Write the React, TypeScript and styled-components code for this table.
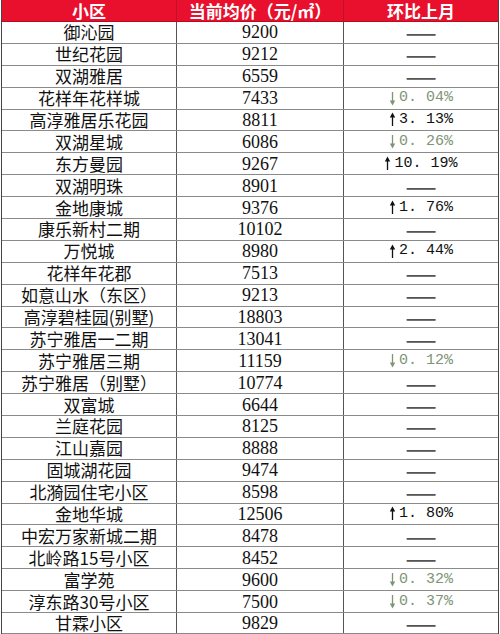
import React from "react";
import styled, { createGlobalStyle } from "styled-components";

const Global = createGlobalStyle`
  html, body { margin: 0; padding: 0; background: #fff; }
  body { width: 500px; height: 634px; overflow: hidden; }
`;

type Change = { dir: "up" | "down"; value: string } | null;
type Row = { name: string; price: string; change: Change };

const rows: Row[] = [
  { name: "御沁园", price: "9200", change: null },
  { name: "世纪花园", price: "9212", change: null },
  { name: "双湖雅居", price: "6559", change: null },
  { name: "花样年花样城", price: "7433", change: { dir: "down", value: "0.04%" } },
  { name: "高淳雅居乐花园", price: "8811", change: { dir: "up", value: "3.13%" } },
  { name: "双湖星城", price: "6086", change: { dir: "down", value: "0.26%" } },
  { name: "东方曼园", price: "9267", change: { dir: "up", value: "10.19%" } },
  { name: "双湖明珠", price: "8901", change: null },
  { name: "金地康城", price: "9376", change: { dir: "up", value: "1.76%" } },
  { name: "康乐新村二期", price: "10102", change: null },
  { name: "万悦城", price: "8980", change: { dir: "up", value: "2.44%" } },
  { name: "花样年花郡", price: "7513", change: null },
  { name: "如意山水（东区）", price: "9213", change: null },
  { name: "高淳碧桂园(别墅)", price: "18803", change: null },
  { name: "苏宁雅居一二期", price: "13041", change: null },
  { name: "苏宁雅居三期", price: "11159", change: { dir: "down", value: "0.12%" } },
  { name: "苏宁雅居（别墅）", price: "10774", change: null },
  { name: "双富城", price: "6644", change: null },
  { name: "兰庭花园", price: "8125", change: null },
  { name: "江山嘉园", price: "8888", change: null },
  { name: "固城湖花园", price: "9474", change: null },
  { name: "北漪园住宅小区", price: "8598", change: null },
  { name: "金地华城", price: "12506", change: { dir: "up", value: "1.80%" } },
  { name: "中宏万家新城二期", price: "8478", change: null },
  { name: "北岭路15号小区", price: "8452", change: null },
  { name: "富学苑", price: "9600", change: { dir: "down", value: "0.32%" } },
  { name: "淳东路30号小区", price: "7500", change: { dir: "down", value: "0.37%" } },
  { name: "甘霖小区", price: "9829", change: null },
];

const Table = styled.div`
  box-sizing: border-box;
  width: 498px;
  height: 634px;
  margin: 0 1px;
  display: grid;
  grid-template-rows: 22px repeat(27, 1fr);
  border-left: 1px solid #444;
  border-right: 1px solid #444;
`;

const Line = styled.div<{ $head?: boolean }>`
  display: grid;
  grid-template-columns: 175px 167px 1fr;
  background: ${(p) => (p.$head ? "#e8102c" : "#fff")};
  border-bottom: 1px solid ${(p) => (p.$head ? "#b50c22" : "#8a8a8a")};
  box-sizing: border-box;
  min-height: 0;
`;

const Cell = styled.div<{ $head?: boolean; $last?: boolean }>`
  display: flex;
  align-items: center;
  justify-content: center;
  min-height: 0;
  border-right: ${(p) => (p.$last ? "none" : `1px solid ${p.$head ? "#c0102a" : "#555"}`)};
  color: ${(p) => (p.$head ? "#fff" : "#111")};
  font-family: "Noto Sans CJK SC", sans-serif;
  font-weight: ${(p) => (p.$head ? 700 : 400)};
  font-size: 17px;
  line-height: 20px;
  white-space: nowrap;
`;

const Price = styled.span`
  font-family: "Liberation Serif", serif;
  font-size: 18px;
  line-height: 20px;
  color: #111;
`;

const Dash = styled.span`
  font-family: "Noto Sans CJK SC", sans-serif;
  font-size: 18px;
  line-height: 20px;
  font-weight: 700;
  color: #555;
`;

const Pct = styled.span<{ $down: boolean }>`
  display: inline-flex;
  align-items: center;
  font-family: "Liberation Mono", monospace;
  font-size: 15px;
  line-height: 20px;
  color: ${(p) => (p.$down ? "#7e9476" : "#111")};
`;

const Arrow = styled.svg`
  width: 7px;
  height: 15px;
  margin-right: 3px;
`;

function Trend({ c }: { c: Change }) {
  if (!c) return <Dash>——</Dash>;
  const down = c.dir === "down";
  const col = down ? "#7e9476" : "#111";
  const [a, b] = c.value.split(".");
  return (
    <Pct $down={down}>
      <Arrow viewBox="0 0 7 15">
        {down ? (
          <>
            <line x1="3.5" y1="1" x2="3.5" y2="11" stroke={col} strokeWidth="1.3" />
            <path d="M0.8 9.5 L3.5 14.5 L6.2 9.5 Z" fill={col} />
          </>
        ) : (
          <>
            <line x1="3.5" y1="4" x2="3.5" y2="14" stroke={col} strokeWidth="1.3" />
            <path d="M0.8 5.5 L3.5 0.5 L6.2 5.5 Z" fill={col} />
          </>
        )}
      </Arrow>
      {a}.&nbsp;{b}
    </Pct>
  );
}

export default function App() {
  return (
    <>
      <Global />
      <Table>
        <Line $head>
          <Cell $head>小区</Cell>
          <Cell $head>当前均价（元/㎡）</Cell>
          <Cell $head $last>环比上月</Cell>
        </Line>
        {rows.map((r) => (
          <Line key={r.name}>
            <Cell>{r.name}</Cell>
            <Cell>
              <Price>{r.price}</Price>
            </Cell>
            <Cell $last>
              <Trend c={r.change} />
            </Cell>
          </Line>
        ))}
      </Table>
    </>
  );
}
